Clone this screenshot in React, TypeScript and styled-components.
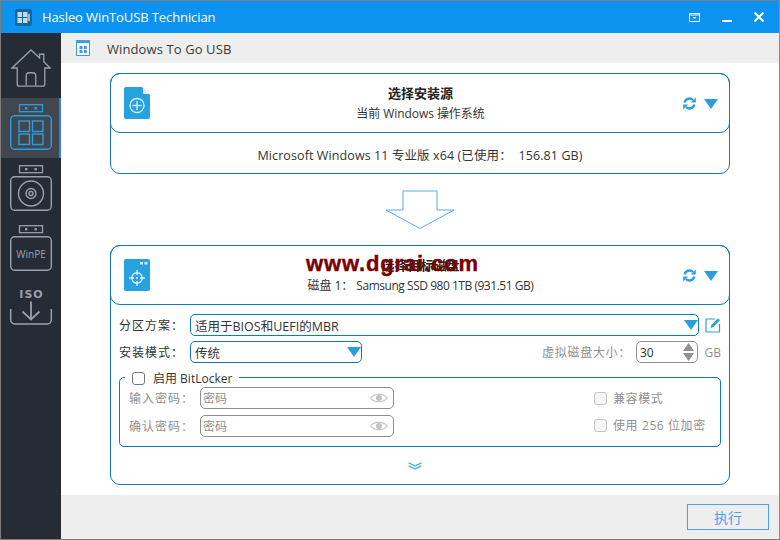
import React from "react";
import styled, { createGlobalStyle } from "styled-components";

const blue = "#0f7ab8";
const sky = "#2a9fe0";
const grey = "#8f8f8f";

const Global = createGlobalStyle`
  html, body { margin: 0; padding: 0; background: #fff; }
  * { box-sizing: border-box; }
  body { font-family: "Open Sans", "Noto Sans CJK SC", sans-serif; font-size: 12px; color: #333; }
`;

const Win = styled.div`
  width: 780px; height: 540px; display: flex; flex-direction: column;
  border: 1px solid #7d7d7d; border-right-color: #8a8a8a; background: #fff; overflow: hidden; position: relative;
`;
const TitleBar = styled.div`
  height: 32px; flex: none; background: #0b93ef; display: flex; align-items: center; color: #fff;
  padding: 0 15px 0 14px; gap: 10px; font-size: 13px; letter-spacing: -.1px;
`;
const TitleText = styled.span`flex: 1;`;
const WinBtns = styled.div`display: flex; align-items: center; gap: 22px;`;
const Body = styled.div`flex: 1; display: flex; min-height: 0;`;
const Side = styled.nav`width: 60px; flex: none; background: #262c36; display: flex; flex-direction: column;`;
const SideItem = styled.div<{ $active?: boolean; $h: number; $top?: number; $bottom?: number }>`
  height: ${p => p.$h}px; display: flex; align-items: center; justify-content: center;
  background: ${p => (p.$active ? "#41464f" : "transparent")};
  border-right: 2px solid ${p => (p.$active ? "#3b7de0" : "transparent")};
  padding: ${p => p.$top ?? 0}px 0 ${p => p.$bottom ?? 0}px 2px;
`;
const Main = styled.main`flex: 1; display: flex; flex-direction: column; min-width: 0;`;
const Header = styled.header`
  height: 30px; flex: none; background: #eeeeee; display: flex; align-items: center; padding-left: 15px; gap: 17px;
  font-size: 13px; letter-spacing: .1px; color: #3a3a3a;
`;
const HeaderText = styled.span`padding-top: 2px;`;
const Content = styled.div`flex: 1; padding-top: 10px; display: flex; flex-direction: column; align-items: center;`;
const Card = styled.section`
  width: 620px; border: 1px solid ${blue}; border-radius: 10px; display: flex; flex-direction: column;
`;
const CardHead = styled.div`
  height: 60px; margin: -1px -1px 0; border: 1px solid ${blue}; border-radius: 10px;
  display: flex; align-items: center; padding: 0 11px 0 13px; flex: none;
`;
const Titles = styled.div`flex: 1; text-align: center; line-height: 20px; padding: 1px 0 0 8px;`;
const Title = styled.div`font-weight: 700; color: #222; font-size: 13px; margin-bottom: 1px;`;
const Sub = styled.div`color: #333; font-size: 12px; letter-spacing: -.06px;`;
const SubLatin = styled.span`letter-spacing: -.47px;`;
const HeadTools = styled.div`display: flex; align-items: center; gap: 8px;`;
const TriSlot = styled.span`line-height: 0; padding-top: 2px;`;
const Info = styled.div`
  height: 40px; display: flex; align-items: center; justify-content: center; font-size: 12.5px; letter-spacing: .1px;
  color: #333; padding-top: 3px; white-space: pre;
`;
const ArrowWrap = styled.div`height: 71px; padding-top: 16px; flex: none; line-height: 0;`;
const Form = styled.div`padding: 9px 8px 0; display: flex; flex-direction: column; position: relative;`;
const Row = styled.div`display: flex; align-items: center;`;
const Label = styled.span<{ $off?: boolean }>`
  width: 71px; flex: none; font-size: 12px; letter-spacing: 1px; color: ${p => (p.$off ? grey : "#333")};
`;
const Select = styled.div<{ $w: number }>`
  width: ${p => p.$w}px; height: 22px; border: 1px solid ${blue}; border-radius: 5px; display: flex; align-items: center;
  justify-content: space-between; padding: 0 0 0 4px; font-size: 12.5px; color: #333;
`;
const SelectArrow = styled.span`line-height: 0;`;
const EditSlot = styled.span`margin-left: 6px; display: flex; line-height: 0;`;
const RowTwo = styled(Row)`margin-top: 5px;`;
const Spacer = styled.div`flex: 1;`;
const SizeLabel = styled.span`color: ${grey}; letter-spacing: .7px; margin-right: 5px;`;
const Spin = styled.div`
  width: 62px; height: 22px; border: 1px solid ${grey}; border-radius: 5px; display: flex; align-items: center;
  justify-content: space-between; padding: 0 3px 0 3px; color: #333;
`;
const SpinBtns = styled.span`display: flex; flex-direction: column; gap: 2px; line-height: 0;`;
const Unit = styled.span`width: 23px; text-align: right; color: ${grey}; flex: none;`;
const Group = styled.div`
  margin-top: 14px; height: 70px; width: 602px; border: 1px solid ${blue}; border-radius: 5px; position: relative;
  display: flex; padding: 9px 14px 0 9px; justify-content: space-between;
`;
const Legend = styled.div`
  position: absolute; top: -8px; left: 5px; height: 16px; background: #fff; padding: 0 7px; display: flex; align-items: center; gap: 8px;
  color: #333;
`;
const Box = styled.span<{ $off?: boolean }>`
  width: 13px; height: 13px; flex: none; border-radius: 3px; display: block;
  border: 1px solid ${p => (p.$off ? "#c4c4c4" : "#777")}; background: ${p => (p.$off ? "#f6f6f6" : "#fff")};
`;
const GroupCol = styled.div`display: flex; flex-direction: column; gap: 6px;`;
const Input = styled.div`
  width: 194px; height: 22px; border: 1px solid ${grey}; border-radius: 5px; display: flex; align-items: center;
  justify-content: space-between; padding: 0 5px 0 2px; color: ${grey};
`;
const PwLabel = styled(Label)`width: 71px;`;
const OptCol = styled.div`display: flex; flex-direction: column; gap: 13px; padding-top: 4px; width: 112px;`;
const Opt = styled.div`display: flex; align-items: center; gap: 6px; color: ${grey}; letter-spacing: .6px; height: 14px;`;
const Chev = styled.div`height: 37px; display: flex; align-items: center; justify-content: center; line-height: 0; padding-right: 11px;`;
const Footer = styled.footer`
  height: 44px; flex: none; background: #eeeeee; display: flex; justify-content: flex-end; align-items: flex-start; padding: 9px 10px 0 0;
`;
const Run = styled.button`
  width: 82px; height: 26px; background: transparent; border: 1px solid #4aa3e8; color: #4aa3e8; font: inherit; font-size: 14px; padding: 0;
`;
const Watermark = styled.div`
  position: absolute; left: 305px; top: 250px; font-family: "Liberation Sans", sans-serif; font-weight: 700; font-size: 22px;
  letter-spacing: .85px; color: #7a0000; line-height: 26px; white-space: nowrap; -webkit-text-stroke: .4px #7a0000;
`;

const stroke = "#9aa0ab";

const HomeIcon = () => (
  <svg width="40" height="38" viewBox="0 0 42 40" fill="none" stroke={stroke} strokeWidth="1.4">
    <path d="M1 20 21 1 l9 8.5 V5.5 h4.5 V13.5 L41 20 H35.5 V37 a2 2 0 0 1-2 2 H8.5 a2 2 0 0 1-2-2 V20 Z" />
    <path d="M16 38.5 V28 a3 3 0 0 1 3-3 h4 a3 3 0 0 1 3 3 V38.5" />
  </svg>
);
const Tab = ({ c }: { c: string }) => (
  <g fill="none" stroke={c} strokeWidth="1.3">
    <rect x="10.5" y="0.7" width="23" height="7" />
    <rect x="16" y="3" width="2.4" height="2.4" fill={c} stroke="none" />
    <rect x="25.5" y="3" width="2.4" height="2.4" fill={c} stroke="none" />
  </g>
);
const WinIcon = () => (
  <svg width="44" height="46" viewBox="0 0 44 46" fill="none" stroke={sky} strokeWidth="1.4">
    <Tab c={sky} />
    <rect x="1.7" y="11.7" width="40.6" height="33.6" rx="4" />
    <rect x="10" y="17" width="10.5" height="10.5" />
    <rect x="23.5" y="17" width="10.5" height="10.5" />
    <rect x="10" y="30" width="10.5" height="10.5" />
    <rect x="23.5" y="30" width="10.5" height="10.5" />
  </svg>
);
const DiscIcon = () => (
  <svg width="44" height="46" viewBox="0 0 44 46" fill="none" stroke={stroke} strokeWidth="1.4">
    <Tab c={stroke} />
    <rect x="1.7" y="11.7" width="40.6" height="33.6" rx="4" />
    <circle cx="22" cy="28.5" r="12.5" />
    <circle cx="22" cy="28.5" r="5" />
    <circle cx="22" cy="28.5" r="2" />
  </svg>
);
const PeText = styled.text`font-family: "Open Sans", sans-serif; font-size: 10px; font-weight: 400; fill: ${stroke}; stroke: none;`;
const WinPeIcon = () => (
  <svg width="44" height="46" viewBox="0 0 44 46" fill="none" stroke={stroke} strokeWidth="1.4">
    <Tab c={stroke} />
    <rect x="1.7" y="11.7" width="40.6" height="33.6" rx="4" />
    <PeText x="22" y="32.5" textAnchor="middle">WinPE</PeText>
  </svg>
);
const IsoText = styled.text`font-family: "DejaVu Sans", sans-serif; font-size: 11px; font-weight: 700; letter-spacing: 1px; fill: ${stroke}; stroke: none;`;
const IsoIcon = () => (
  <svg width="44" height="38" viewBox="0 0 44 38" fill="none" stroke={stroke} strokeWidth="1.5">
    <IsoText x="22.5" y="10" textAnchor="middle">ISO</IsoText>
    <path d="M22 13.5 V31 M13.5 23.5 22 31.5 30.5 23.5" strokeWidth="1.8" />
    <path d="M1.7 21 V32 a4 4 0 0 0 4 4 H38.3 a4 4 0 0 0 4-4 V21" />
  </svg>
);
const AddDocIcon = () => (
  <svg width="26" height="32" viewBox="0 0 26 32">
    <path d="M2 0 H18 L26 8 V30 a2 2 0 0 1-2 2 H2 a2 2 0 0 1-2-2 V2 a2 2 0 0 1 2-2Z" fill="#27a1e0" />
    <path d="M19 1 25 7 H19Z" fill="#e8f5fc" />
    <circle cx="13" cy="18.5" r="7" fill="none" stroke="#d8eefa" strokeWidth="1.3" />
    <path d="M13 14 V23 M8.5 18.5 H17.5" stroke="#d8eefa" strokeWidth="1.3" />
  </svg>
);
const TargetIcon = () => (
  <svg width="26" height="32" viewBox="0 0 26 32">
    <rect width="26" height="32" rx="2" fill="#27a1e0" />
    <rect x="16" y="3" width="3" height="2.5" fill="#d8eefa" />
    <rect x="20.5" y="3" width="3" height="2.5" fill="#d8eefa" />
    <circle cx="13" cy="19" r="5.2" fill="none" stroke="#d8eefa" strokeWidth="1.4" />
    <path d="M13 11 V16 M13 22 V27 M5 19 H10 M16 19 H21" stroke="#d8eefa" strokeWidth="1.4" />
    <circle cx="13" cy="19" r="1" fill="#d8eefa" />
  </svg>
);
const Refresh = () => (
  <svg width="13" height="13" viewBox="0 0 13 13" fill="none" stroke="#2a9fe0" strokeWidth="2.4">
    <path d="M1.6 5.4 A5 5 0 0 1 10 3" />
    <path d="M11.4 7.6 A5 5 0 0 1 3 10" />
    <path d="M12.8 0.4 V5.4 H7.8Z" fill="#2a9fe0" stroke="none" />
    <path d="M0.2 12.6 V7.6 H5.2Z" fill="#2a9fe0" stroke="none" />
  </svg>
);
const Tri = ({ w = 14, h = 10, c = "#2a9fe0" }: { w?: number; h?: number; c?: string }) => (
  <svg width={w} height={h} viewBox="0 0 14 10"><path d="M0 0 H14 L7 10Z" fill={c} /></svg>
);
const TriUp = () => (
  <svg width="11" height="8" viewBox="0 0 14 10"><path d="M0 10 H14 L7 0Z" fill="#8f8f8f" /></svg>
);
const Eye = () => (
  <svg width="18" height="12" viewBox="0 0 18 12" fill="none" stroke="#c2c2c2" strokeWidth="1.2">
    <path d="M.8 6 C4 1.2 14 1.2 17.2 6 C14 10.8 4 10.8 .8 6Z" />
    <circle cx="9" cy="6" r="3" fill="#c2c2c2" stroke="none" />
  </svg>
);
const Edit = () => (
  <svg width="16" height="16" viewBox="0 0 16 16" fill="none" stroke="#2a9fe0" strokeWidth="1.2">
    <path d="M10 2 H1 V15 H14.5 V7" />
    <path d="M5.5 11 6.3 8 13 1.2 15 3.2 8.5 10Z" fill="#2a9fe0" stroke="none" />
  </svg>
);

export default function App() {
  return (
    <>
      <Global />
      <Win>
        <TitleBar>
          <svg width="17" height="17" viewBox="0 0 17 17">
            <rect width="17" height="17" rx="2" fill="#14689f" />
            <rect x="2.5" y="3" width="10" height="11" fill="#c9d9e4" />
            <path d="M7.5 3 V14 M2.5 8.5 H12.5" stroke="#14689f" strokeWidth="1" />
            <rect x="12.5" y="5" width="2.5" height="7" fill="#8fb7d2" />
          </svg>
          <TitleText>Hasleo WinToUSB Technician</TitleText>
          <WinBtns>
            <svg width="11" height="9" viewBox="0 0 11 9" fill="none" stroke="#fff"><rect x=".5" y=".5" width="10" height="8" /><path d="M.5 2 H10.5" /><path d="M3.5 4 H7.5 L5.5 6Z" fill="#fff" stroke="none" /></svg>
            <svg width="10" height="10" viewBox="0 0 10 10"><rect y="8" width="10" height="2" fill="#fff" /></svg>
            <svg width="10" height="10" viewBox="0 0 10 10" stroke="#fff" strokeWidth="2"><path d="M.5 .5 9.5 9.5 M9.5 .5 .5 9.5" /></svg>
          </WinBtns>
        </TitleBar>
        <Body>
          <Side>
            <SideItem $h={65} $top={5}><HomeIcon /></SideItem>
            <SideItem $h={60} $active $bottom={2}><WinIcon /></SideItem>
            <SideItem $h={60}><DiscIcon /></SideItem>
            <SideItem $h={60}><WinPeIcon /></SideItem>
            <SideItem $h={58}><IsoIcon /></SideItem>
          </Side>
          <Main>
            <Header>
              <svg width="14" height="16" viewBox="0 0 14 16" fill="none">
                <rect x=".5" y=".5" width="13" height="15" stroke="#3d9fdc" fill="#f4fafe" />
                <rect x="0" y="0" width="14" height="3" fill="#3d9fdc" />
                <rect x="3.5" y="6" width="3" height="3" fill="#3d9fdc" /><rect x="7.8" y="6" width="3" height="3" fill="#3d9fdc" />
                <rect x="3.5" y="10" width="3" height="3" fill="#3d9fdc" /><rect x="7.8" y="10" width="3" height="3" fill="#3d9fdc" />
              </svg>
              <HeaderText>Windows To Go USB</HeaderText>
            </Header>
            <Content>
              <Card>
                <CardHead>
                  <AddDocIcon />
                  <Titles><Title>选择安装源</Title><Sub>当前 Windows 操作系统</Sub></Titles>
                  <HeadTools><Refresh /><TriSlot><Tri /></TriSlot></HeadTools>
                </CardHead>
                <Info>{"Microsoft Windows 11 专业版 x64 (已使用：  156.81 GB)"}</Info>
              </Card>
              <ArrowWrap>
                <svg width="70" height="40" viewBox="0 0 70 40" fill="#fff" stroke="#58ace0" strokeWidth="1">
                  <path d="M18 1 H52 V20 H69 L35 38.5 1 20 H18Z" />
                </svg>
              </ArrowWrap>
              <Card>
                <CardHead>
                  <TargetIcon />
                  <Titles><Title>选择目标磁盘</Title><Sub>磁盘 1： <SubLatin>Samsung SSD 980 1TB (931.51 GB)</SubLatin></Sub></Titles>
                  <HeadTools><Refresh /><TriSlot><Tri /></TriSlot></HeadTools>
                </CardHead>
                <Form>
                  <Row>
                    <Label>分区方案：</Label>
                    <Select $w={509}><span>适用于BIOS和UEFI的MBR</span><SelectArrow><Tri /></SelectArrow></Select>
                    <EditSlot><Edit /></EditSlot>
                  </Row>
                  <RowTwo>
                    <Label>安装模式：</Label>
                    <Select $w={172}><span>传统</span><SelectArrow><Tri /></SelectArrow></Select>
                    <Spacer />
                    <SizeLabel>虚拟磁盘大小：</SizeLabel>
                    <Spin><span>30</span><SpinBtns><TriUp /><Tri w={11} h={8} c="#8f8f8f" /></SpinBtns></Spin>
                    <Unit>GB</Unit>
                  </RowTwo>
                  <Group>
                    <Legend><Box /><span>启用 BitLocker</span></Legend>
                    <GroupCol>
                      <Row><PwLabel $off>输入密码：</PwLabel><Input><span>密码</span><Eye /></Input></Row>
                      <Row><PwLabel $off>确认密码：</PwLabel><Input><span>密码</span><Eye /></Input></Row>
                    </GroupCol>
                    <OptCol>
                      <Opt><Box $off /><span>兼容模式</span></Opt>
                      <Opt><Box $off /><span>使用 256 位加密</span></Opt>
                    </OptCol>
                  </Group>
                  <Chev>
                    <svg width="14" height="8" viewBox="0 0 14 8" fill="none" stroke="#5bb3e8" strokeWidth="1.5">
                      <path d="M.5 .8 7 4 13.5 .8 M.5 3.8 7 7 13.5 3.8" />
                    </svg>
                  </Chev>
                </Form>
              </Card>
            </Content>
            <Footer><Run>执行</Run></Footer>
          </Main>
        </Body>
        <Watermark>www.dgrai.com</Watermark>
      </Win>
    </>
  );
}
